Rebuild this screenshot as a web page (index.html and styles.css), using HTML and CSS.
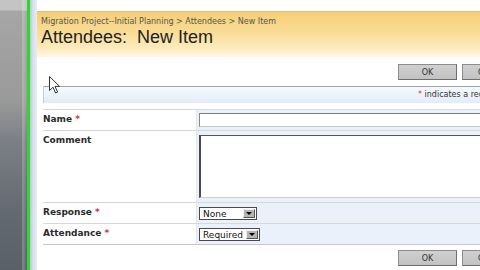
FILE: index.html
```html
<!DOCTYPE html>
<html lang="en">
<head>
    <meta charset="UTF-8">
    <meta name="viewport" content="width=device-width, initial-scale=1.0">
    <title>Attendees: New Item</title>
    <link rel="stylesheet" href="styles.css">
</head>
<body>
    <div class="desk"></div>
    <div class="edge"></div>
    <div class="rail"></div>
    <div class="page">
        <!-- title area -->
        <div class="head">
            <div class="crumbs">Migration Project--Initial Planning &gt; Attendees &gt; New Item</div>
            <h1 class="title">Attendees:&nbsp; New Item</h1>
        </div>

        <div class="form">
            <div class="toolbar">
                <button class="btn">OK</button>
                <button class="btn">Cancel</button>
            </div>
            <div class="note"><span class="req">*</span> indicates a required field</div>

            <div class="rows">
                <div class="row">
                    <div class="label">Name <span class="req">*</span></div>
                    <div class="field name-field"><div class="input"></div></div>
                </div>
                <div class="row">
                    <div class="label">Comment</div>
                    <div class="field comment-field"><div class="textarea"></div></div>
                </div>
                <div class="row">
                    <div class="label">Response <span class="req">*</span></div>
                    <div class="field">
                        <div class="select select-none"><span>None</span><span class="arrow"></span></div>
                    </div>
                </div>
                <div class="row">
                    <div class="label">Attendance <span class="req">*</span></div>
                    <div class="field">
                        <div class="select select-req"><span>Required</span><span class="arrow"></span></div>
                    </div>
                </div>
            </div>

            <div class="toolbar bottom">
                <button class="btn">OK</button>
                <button class="btn">Cancel</button>
            </div>
        </div>
    </div>

    <!-- mouse pointer -->
    <svg class="pointer" width="12" height="18" viewBox="0 0 12 18">
        <path d="M0.5 0.5 L0.5 14.5 L4 11.2 L6.6 17 L8.6 16.1 L6 10.4 L10.6 10.4 Z" fill="#fff" stroke="#333" stroke-width="1"/>
    </svg>
</body>
</html>
```

FILE: styles.css
```css
html, body{
    margin: 0;
    padding: 0;
}
body{
    position: relative;
    display: flex;
    width: 480px;
    height: 270px;
    overflow: hidden;
    font-family: "DejaVu Sans", sans-serif;
    color: #222;
    background: #fff;
}

/* blurry desktop on the left */
.desk{
    flex: 0 0 27px;
    background:
        linear-gradient(to right, rgba(255,255,255,0) 80%, rgba(255,255,255,.25) 84%, rgba(255,255,255,0)),
        linear-gradient(#c4c4c4 0, #c4c4c4 10px, #a6a6a6 11px, #9a9a9a 100px, #7c8086 140px, #646a72 210px, #5a6068);
}
.edge{
    flex: 0 0 3px;
    background: #2ed82e;
}
.rail{
    flex: 0 0 7px;
    background: linear-gradient(to right, #b9c6d3, #d6e0ea 40%, #e6edf4);
}

/* page */
.page{
    flex: 0 0 520px;
    padding-top: 11px;
    background: #fff;
}
.head{
    height: 40px;
    padding: 5px 0 0 4px;
    border-top: 1px solid #d9bf84;
    background: linear-gradient(#f6cf74, #f9dc96 45%, #fcebbd 80%, #fff7e2);
}
.crumbs{
    font-size: 8px;
    line-height: 10px;
    color: #555;
}
.title{
    margin: 0;
    font-family: "Liberation Sans", sans-serif;
    font-size: 18px;
    font-weight: normal;
    line-height: 20px;
    color: #222;
}

.form{
    width: 478px;
    margin-left: 6px;
}
.toolbar{
    display: flex;
    justify-content: flex-end;
    gap: 5px;
    padding: 7px 0 6px;
}
.toolbar.bottom{
    padding-top: 5px;
}
.btn{
    width: 59px;
    height: 16px;
    padding: 0;
    font-family: "DejaVu Sans", sans-serif;
    font-size: 8px;
    color: #333;
    background: linear-gradient(#d0d0d0, #c2c2c2);
    border: 1px solid #8c8c8c;
    border-right-color: #6e6e6e;
    border-bottom-color: #6e6e6e;
}

/* required note */
.note{
    height: 16px;
    padding-left: 374px;
    font-size: 8px;
    line-height: 16px;
    white-space: nowrap;
    color: #333;
    border-top: 1px solid #9aa3ad;
    border-left: 1px solid #c3ccd6;
    background: linear-gradient(#f6f9fd, #e2ecf7);
}
.req{
    color: #c8384a;
}

/* form rows */
.rows{
    margin-top: 6px;
    border-bottom: 1px solid #c8c8c8;
}
.row{
    display: flex;
    border-top: 1px solid #d8d8d8;
}
.label{
    flex: 0 0 153px;
    padding-top: 4px;
    font-size: 9px;
    font-weight: bold;
    line-height: 11px;
    color: #2a2a2a;
    border-right: 1px solid #e6e6e6;
}
.field{
    flex: 1;
    padding: 4px 0 3px 2px;
    background: #eaf1fa;
}
.name-field{
    padding-top: 3px;
}
.comment-field{
    padding-bottom: 4px;
}
.input{
    height: 12px;
    border: 1px solid #c4c4c4;
    border-top-color: #7a7a7a;
    border-left-color: #8a8a8a;
    background: #fff;
}
.textarea{
    height: 61px;
    border: 1px solid #d0d0d0;
    border-top-color: #555;
    border-left: 2px solid #4a4a4a;
    background: #fff;
}
.select{
    display: flex;
    align-items: center;
    justify-content: space-between;
    box-sizing: border-box;
    height: 13px;
    padding: 0 1px 0 3px;
    font-size: 9px;
    color: #111;
    background: #fff;
    border: 1px solid #4a4a4a;
}
.select-none{
    width: 58px;
}
.select-req{
    width: 61px;
}
.arrow{
    position: relative;
    width: 12px;
    height: 9px;
    background: #b4b4b4;
    border: 1px solid #eee;
    border-right-color: #555;
    border-bottom-color: #555;
    box-sizing: border-box;
}
.arrow::after{
    content: "";
    position: absolute;
    left: 2px;
    top: 2px;
    border-left: 3px solid transparent;
    border-right: 3px solid transparent;
    border-top: 3px solid #000;
}

.pointer{
    position: absolute;
    left: 49px;
    top: 76px;
}
```
